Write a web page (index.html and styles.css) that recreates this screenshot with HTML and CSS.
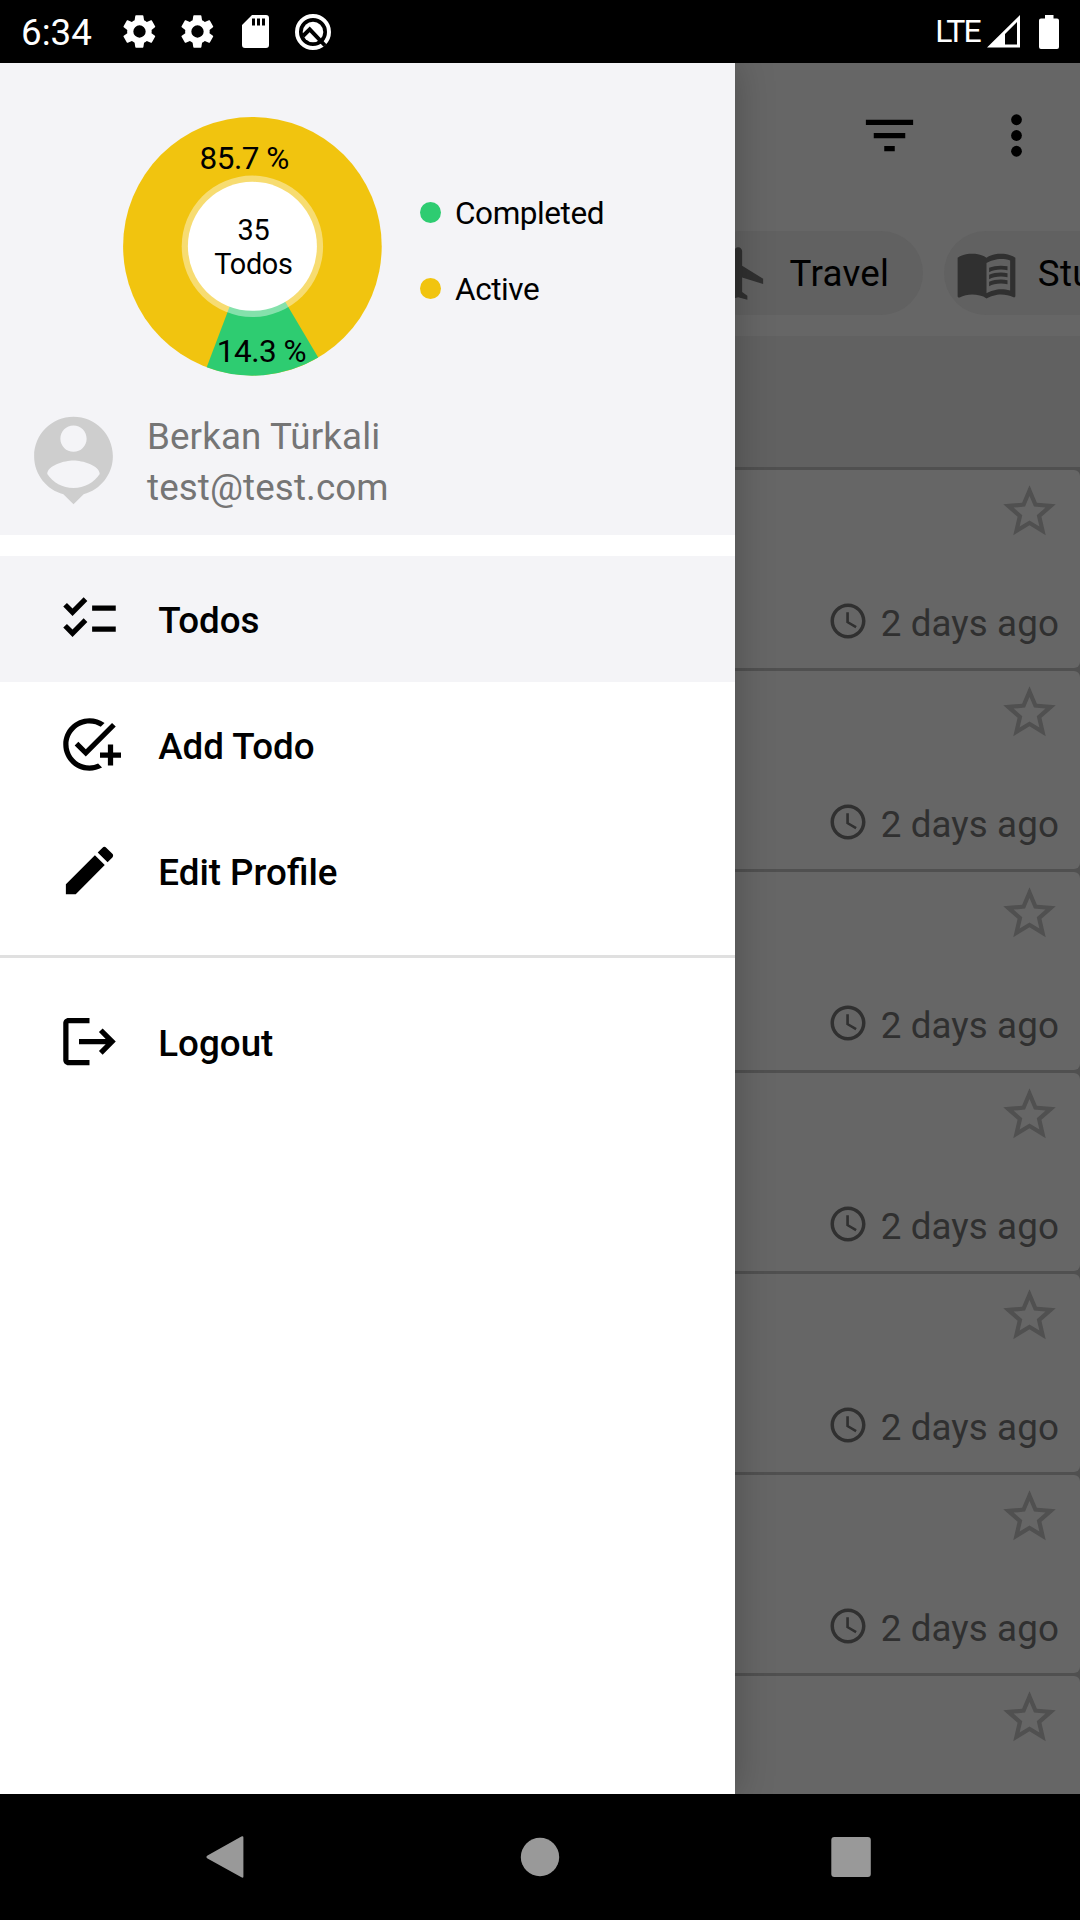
FILE: index.html
```html
<!DOCTYPE html>
<html lang="en">
<head>
<meta charset="utf-8">
<title>Todos</title>
<link rel="stylesheet" href="styles.css">
</head>
<body>
<svg class="defs" aria-hidden="true">
  <symbol id="gear" viewBox="0 0 24 24"><path d="M19.4 13c0-.3.1-.6.1-1s0-.7-.1-1l2.1-1.6c.2-.2.3-.4.1-.7l-2-3.4c-.1-.2-.4-.3-.6-.2l-2.500 1c-.5-.4-1.100-.7-1.700-1l-.4-2.600c0-.3-.2-.5-.5-.5h-4c-.3 0-.5.2-.5.4l-.4 2.700c-.6.2-1.200.6-1.700 1l-2.500-1c-.2-.1-.5 0-.6.200l-2 3.400c-.1.200-.1.500.1.700L4.500 11c0 .3-.1.600-.1 1s0 .7.1 1l-2.200 1.600c-.2.200-.3.400-.1.700l2 3.400c.1.200.4.300.6.200l2.500-1c.5.400 1.100.7 1.700 1l.4 2.600c0 .3.2.5.5.5h4c.2 0 .5-.2.5-.5l.4-2.600c.6-.2 1.200-.6 1.700-1l2.500 1c.2.100.5 0 .6-.2l2-3.400c.1-.2.1-.5-.1-.7zM12 15.800a3.800 3.800 0 1 1 0-7.600 3.800 3.800 0 0 1 0 7.600z"/></symbol>
  <symbol id="star" viewBox="0 0 24 24"><path d="M22 9.240l-7.190-.62L12 2 9.190 8.630 2 9.240l5.460 4.730L5.820 21 12 17.270 18.180 21l-1.630-7.030L22 9.240zM12 15.400l-3.760 2.270 1-4.280-3.320-2.880 4.380-.38L12 6.100l1.710 4.040 4.380.38-3.320 2.880 1 4.280L12 15.400z"/></symbol>
  <symbol id="clock" viewBox="0 0 24 24"><path d="M11.990 2C6.470 2 2 6.480 2 12s4.470 10 9.990 10C17.520 22 22 17.520 22 12S17.520 2 11.990 2zM12 20c-4.420 0-8-3.580-8-8s3.580-8 8-8 8 3.580 8 8-3.580 8-8 8zm.5-13H11v6l5.250 3.150.75-1.230-4.500-2.670z"/></symbol>
</svg>

<div class="screen">
  <header class="status">
    <span class="time">6:34</span>
    <div class="notifications">
      <svg class="gear"><use href="#gear"/></svg>
      <svg class="gear"><use href="#gear"/></svg>
      <svg class="sd" viewBox="0 0 27 33"><path fill-rule="evenodd" d="M10 0H24a3 3 0 0 1 3 3V30a3 3 0 0 1-3 3H3a3 3 0 0 1-3-3V10zM10 3.500v7h3v-7zM15 3.500v7h3v-7zM20 3.500v7h3v-7z"/></svg>
      <svg class="quick" viewBox="0 0 36 36"><circle class="ring" cx="18" cy="18" r="16"/><circle cx="18" cy="18" r="10.300"/><path class="cut" d="M8 22 14.700 15.300 30 31.500"/></svg>
    </div>
    <div class="system">
      <span class="network">LTE</span>
      <svg class="signal" viewBox="0 0 33 33"><path fill-rule="evenodd" d="M33 0V32.500H0zM30 7 18 19V29.500H30z"/></svg>
      <svg class="battery" viewBox="0 0 20 34"><path d="M6 0h8.500v3.500H18a2 2 0 0 1 2 2V32a2 2 0 0 1-2 2H2a2 2 0 0 1-2-2V5.500a2 2 0 0 1 2-2h4z"/></svg>
    </div>
  </header>

  <main class="app">
    <div class="toolbar">
      <svg class="icon" viewBox="0 0 24 24"><path d="M10 18h4v-2h-4v2zM3 6v2h18V6H3zm3 7h12v-2H6v2z"/></svg>
      <svg class="icon" viewBox="0 0 24 24"><circle cx="12" cy="6" r="2.050"/><circle cx="12" cy="12" r="2.050"/><circle cx="12" cy="18" r="2.050"/></svg>
    </div>
    <div class="chips">
      <div class="chip"><svg class="icon" viewBox="0 0 24 24"><path d="M21 16v-2l-8-5V3.500c0-.83-.67-1.500-1.500-1.500S10 2.670 10 3.500V9l-8 5v2l8-2.500V19l-2 1.500V22l3.500-1 3.500 1v-1.500L13 19v-5.500l8 2.500z"/></svg><span>Travel</span></div>
      <div class="chip study"><svg class="icon" viewBox="0 0 24 24"><path d="M21 5c-1.110-.35-2.330-.5-3.500-.5-1.950 0-4.050.4-5.500 1.500-1.450-1.100-3.550-1.500-5.500-1.500S2.450 4.900 1 6v14.650c0 .25.25.5.5.5.1 0 .15-.05.25-.05C3.100 20.450 5.050 20 6.500 20c1.950 0 4.050.4 5.500 1.500 1.350-.85 3.800-1.500 5.500-1.500 1.650 0 3.350.3 4.750 1.050.1.05.15.05.25.05.25 0 .5-.25.5-.5V6c-.6-.45-1.250-.75-2-1zm0 13.500c-1.100-.35-2.300-.5-3.500-.5-1.700 0-4.150.65-5.500 1.500V8c1.350-.85 3.800-1.500 5.500-1.500 1.200 0 2.400.15 3.500.5v11.500z"/><path d="M17.500 10.500c.88 0 1.730.09 2.500.26V9.240c-.79-.15-1.640-.24-2.500-.24-1.700 0-3.240.29-4.500.83v1.660c1.130-.64 2.700-.99 4.500-.99zM13 12.490v1.660c1.130-.64 2.700-.99 4.500-.99.88 0 1.730.09 2.500.26V11.900c-.79-.15-1.640-.24-2.500-.24-1.700 0-3.240.3-4.500.83zM17.500 14.330c-1.700 0-3.240.29-4.500.83v1.660c1.130-.64 2.700-.99 4.500-.99.88 0 1.730.09 2.500.26v-1.520c-.79-.16-1.640-.24-2.500-.24z"/></svg><span>Study</span></div>
    </div>
    <div class="summary"></div>
    <div class="list">
      <article class="todo"><svg class="star"><use href="#star"/></svg><div class="age"><svg class="clock"><use href="#clock"/></svg>2 days ago</div></article>
      <article class="todo"><svg class="star"><use href="#star"/></svg><div class="age"><svg class="clock"><use href="#clock"/></svg>2 days ago</div></article>
      <article class="todo"><svg class="star"><use href="#star"/></svg><div class="age"><svg class="clock"><use href="#clock"/></svg>2 days ago</div></article>
      <article class="todo"><svg class="star"><use href="#star"/></svg><div class="age"><svg class="clock"><use href="#clock"/></svg>2 days ago</div></article>
      <article class="todo"><svg class="star"><use href="#star"/></svg><div class="age"><svg class="clock"><use href="#clock"/></svg>2 days ago</div></article>
      <article class="todo"><svg class="star"><use href="#star"/></svg><div class="age"><svg class="clock"><use href="#clock"/></svg>2 days ago</div></article>
      <article class="todo"><svg class="star"><use href="#star"/></svg></article>
    </div>

    <aside class="drawer">
      <section class="profile">
        <div class="stats">
          <svg class="donut" viewBox="-130.400 -130.300 260 260">
            <circle class="active" r="129.300"/>
            <path class="done" d="M0 0 65.800 111.300A129.300 129.300 0 0 1-45.700 121z"/>
            <circle class="halo" r="70.700"/>
            <circle class="hole" r="64.500"/>
            <text class="share" x="-8.200" y="-77.500">85.7 %</text>
            <text class="share" x="9" y="115.500">14.3 %</text>
            <text class="total" x="1" y="-6.500">35</text>
            <text class="total" x="1" y="27.500">Todos</text>
          </svg>
          <div class="legend">
            <div class="key"><i class="dot dot-done"></i><span>Completed</span></div>
            <div class="key"><i class="dot dot-active"></i><span>Active</span></div>
          </div>
        </div>
        <div class="user">
          <svg class="avatar" viewBox="0 0 24 24"><path d="M12 2c-4.970 0-9 4.030-9 9 0 4.170 2.840 7.670 6.690 8.690L12 22l2.310-2.310C18.160 18.670 21 15.170 21 11c0-4.970-4.030-9-9-9zm0 2c1.660 0 3 1.340 3 3s-1.340 3-3 3-3-1.340-3-3 1.340-3 3-3zm0 14.300c-2.500 0-4.710-1.280-6-3.220.03-1.990 4-3.080 6-3.080 1.990 0 5.970 1.090 6 3.080-1.290 1.940-3.500 3.220-6 3.220z"/></svg>
          <div class="who"><div>Berkan Türkali</div><div>test@test.com</div></div>
        </div>
      </section>
      <nav class="menu">
        <div class="item selected"><svg class="icon" viewBox="0 0 24 24"><path d="M22 7h-9v2h9V7zM22 15h-9v2h9v-2zM5.540 11L2 7.460l1.410-1.410 2.120 2.120 4.240-4.240 1.410 1.410L5.540 11zM5.540 19L2 15.460l1.410-1.410 2.120 2.120 4.240-4.240 1.410 1.410L5.540 19z"/></svg><span>Todos</span></div>
        <div class="item"><svg class="icon" viewBox="0 0 24 24"><path d="M22 5.180L10.590 16.600l-4.240-4.240 1.410-1.410 2.830 2.830 10-10L22 5.180zM12 20c-4.410 0-8-3.590-8-8s3.590-8 8-8c1.570 0 3.040.46 4.280 1.250l1.450-1.450C16.100 2.670 14.130 2 12 2 6.480 2 2 6.480 2 12s4.480 10 10 10c1.730 0 3.360-.44 4.780-1.220l-1.500-1.500c-1 .46-2.110.72-3.280.72zm7-5h-3v2h3v3h2v-3h3v-2h-3v-3h-2v3z"/></svg><span>Add Todo</span></div>
        <div class="item"><svg class="icon" viewBox="0 0 24 24"><path d="M3 17.250V21h3.750L17.810 9.940l-3.750-3.750L3 17.250zM20.710 7.040c.39-.39.39-1.020 0-1.410l-2.340-2.340c-.39-.39-1.020-.39-1.410 0l-1.830 1.830 3.750 3.750 1.830-1.830z"/></svg><span>Edit Profile</span></div>
        <hr class="divider">
        <div class="item"><svg class="icon" viewBox="0 0 24 24"><path d="M17 7l-1.410 1.410L18.170 11H8v2h10.170l-2.580 2.580L17 17l5-5-5-5zM4 5h8V3H4c-1.100 0-2 .9-2 2v14c0 1.100.9 2 2 2h8v-2H4V5z"/></svg><span>Logout</span></div>
      </nav>
    </aside>
  </main>

  <footer class="navbar">
    <svg viewBox="0 0 44 44"><path d="M40.400 2.500V41.500q0 2-2 .8L4.500 23.500q-2.200-1.500 0-3L38.400 1.500q2-1 2 1z"/></svg>
    <svg viewBox="0 0 44 44"><circle cx="22" cy="22" r="19.200"/></svg>
    <svg viewBox="0 0 44 44"><rect x="2.300" y="2" width="39.500" height="40" rx="3"/></svg>
  </footer>
</div>
</body>
</html>
```
FILE: styles.css
```css
* { box-sizing: border-box; }
body { margin: 0; font-family: Roboto, "Liberation Sans", sans-serif; font-size: 36.75px; }
svg { display: block; flex: none; }
.defs { display: none; }
.screen { width: 1080px; height: 1920px; display: flex; flex-direction: column; overflow: hidden; background: #000; }
.icon { width: 63px; height: 63px; }

.status { height: 63px; display: flex; align-items: center; color: #fff; fill: #fff; padding: 0 21px; }
.time { width: 102px; padding-top: 2px; }
.notifications { display: flex; align-items: center; }
.gear { width: 39px; height: 39px; margin: 0 19px 0 -3px; }
.gear + .gear { margin-left: 0; }
.sd { width: 27px; height: 33px; margin-left: 6px; margin-right: 26px; }
.quick { width: 36px; height: 36px; }
.ring { fill: none; stroke: #fff; stroke-width: 4; }
.cut { fill: none; stroke: #000; stroke-width: 4; }
.system { margin-left: auto; display: flex; align-items: center; }
.network { font-size: 32px; letter-spacing: -1.800px; margin-right: 7px; padding-bottom: 2px; }
.signal { width: 33px; height: 33px; margin-right: 19px; }
.battery { width: 20px; height: 34px; }

.app { position: relative; height: 1731px; background: #666; overflow: hidden; }
.toolbar { height: 147px; display: flex; justify-content: flex-end; align-items: center; gap: 64px; padding: 0 32px 2px 0; }
.chips { height: 126px; padding: 21px 0; margin-left: 698px; display: flex; gap: 21px; }
.chip { flex: none; height: 84px; border-radius: 42px; background: #616161; display: flex; align-items: center; gap: 18.500px; padding: 0 33.500px 0 10px; letter-spacing: .3px; }
.chip .icon { fill: #303030; }
.study { gap: 20px; padding-left: 11px; }
.summary { height: 131px; background: #616161; }
.list { background: #505050; display: flex; flex-direction: column; gap: 3px; padding-top: 3px; }
.todo { height: 198px; background: #666; border-radius: 0 6px 6px 0; display: flex; flex-direction: column; align-items: flex-end; justify-content: space-between; padding: 10px 19px 23px 0; }
.star { width: 63px; height: 63px; fill: #505050; }
.age { display: flex; align-items: center; gap: 11.500px; margin-right: 2px; color: #303030; fill: #303030; line-height: 43px; letter-spacing: .1px; }
.clock { width: 42px; height: 42px; margin-top: -6px; }

.drawer { position: absolute; left: 0; top: 0; width: 735px; height: 100%; background: #fff; box-shadow: 0 0 36px rgba(0, 0, 0, .25); }
.profile { height: 472px; background: #f4f4f7; padding: 53px 0 0 21px; }
.stats { display: flex; align-items: center; padding-left: 101px; gap: 38px; }
.donut { width: 260px; height: 260px; text-anchor: middle; }
.active { fill: #f1c40f; }
.done { fill: #2ecc71; }
.halo { fill: #fff; fill-opacity: .41; }
.hole { fill: #fff; }
.share { font-size: 31.5px; letter-spacing: -.5px; }
.total { font-size: 28.875px; letter-spacing: -.3px; }
.legend { font-size: 31.5px; letter-spacing: -.42px; display: flex; flex-direction: column; gap: 38px; padding-top: 9px; }
.key { display: flex; align-items: center; gap: 14px; }
.key span { padding-top: 1px; }
.dot { width: 21px; height: 21px; border-radius: 50%; }
.dot-done { background: #2ecc71; }
.dot-active { background: #f1c40f; }
.user { display: flex; align-items: center; gap: 21px; margin-top: 32px; }
.avatar { width: 105px; height: 105px; fill: #cecece; }
.who { color: #757575; line-height: 51px; letter-spacing: .12px; padding-top: 2px; }
.menu { padding-top: 21px; }
.item { height: 126px; display: flex; align-items: center; gap: 37.500px; padding-left: 57.75px; font-weight: 500; }
.item span { padding-top: 2px; }
.item .icon { margin-top: -1px; }
.selected { background: #f4f4f7; }
.divider { height: 3px; margin: 21px 0; border: 0; background: #e0e0e0; }

.navbar { height: 126px; display: flex; align-items: center; justify-content: space-between; padding: 0 207px 0 203px; fill: #999; }
.navbar svg { width: 44px; height: 44px; }
.navbar svg:nth-child(2) { margin-left: 3px; }
```
